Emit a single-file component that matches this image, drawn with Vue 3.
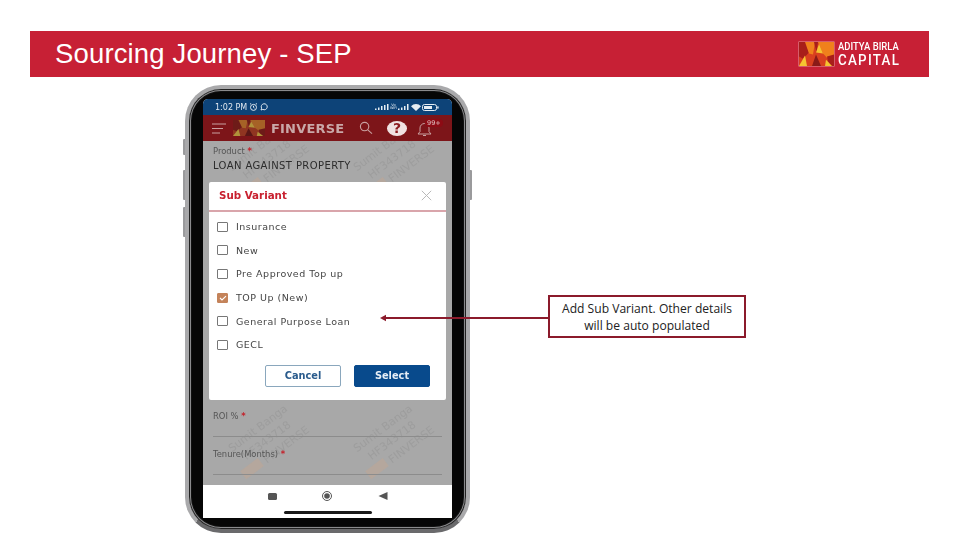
<script setup>
const options = [
  { label: 'Insurance', checked: false },
  { label: 'New', checked: false },
  { label: 'Pre Approved Top up', checked: false },
  { label: 'TOP Up (New)', checked: true },
  { label: 'General Purpose Loan', checked: false },
  { label: 'GECL', checked: false }
]
const marks = ['m1', 'm2', 'm3', 'm4']
</script>

<template>
  <div class="slide">
    <svg width="0" height="0" class="defs">
      <symbol id="ab-logo" viewBox="0 0 35 23" preserveAspectRatio="none">
        <rect width="35" height="23" fill="#d9401f" />
        <polygon points="0,0 7,0 10,10 4,16 0,14" fill="#a81e1a" />
        <polygon points="6,0 16,0 14,12 10,11" fill="#f0801c" />
        <polygon points="15,0 19,0 17.500,10" fill="#a81e1a" />
        <polygon points="19,0 35,0 35,15 28,15 24,11" fill="#f0801c" />
        <polygon points="17,10 20,2 24,11" fill="#f5c431" />
        <polygon points="28,14 35,12 35,23 30,23" fill="#a81e1a" />
        <polygon points="0,23 6,13 8,23" fill="#f5c431" />
        <polygon points="17,12 13,23 22,23" fill="#8a1a18" />
        <polygon points="27,17 33,23 26,23" fill="#f5c431" />
      </symbol>
    </svg>

    <header class="banner">
      <h1 class="banner-title">Sourcing Journey - SEP</h1>
      <div class="brand">
        <svg class="brand-mark"><use href="#ab-logo" /></svg>
        <div class="brand-text">
          <span class="brand-top">ADITYA BIRLA</span>
          <span class="brand-bottom">CAPITAL</span>
        </div>
      </div>
    </header>

    <main class="stage">
      <div class="phone">
        <i class="side-btn b1"></i>
        <i class="side-btn b2"></i>
        <i class="side-btn b3"></i>
        <i class="side-btn b4"></i>
        <div class="bezel">
          <div class="screen">
            <div class="status">
              <span class="status-left">
                1:02 PM
                <svg width="9" height="8" viewBox="0 0 9 8" fill="none" stroke="#dfe7ef" stroke-width="1"><circle cx="4.500" cy="4.400" r="3" /><path d="M1 1.200 2.200.4M8 1.200 6.800.4M4.500 2.800v1.600l1 .6" /></svg>
                <svg width="8" height="8" viewBox="0 0 8 8" fill="none" stroke="#dfe7ef" stroke-width="1"><path d="M1 7l.6-1.800A3 3 0 1 1 2.800 6.400Z" /></svg>
              </span>
              <span class="status-right">
                <svg width="14" height="6" viewBox="0 0 14 6" fill="#e6edf3"><rect x="0" y="4.500" width="1.500" height="1.500" /><rect x="3" y="3.500" width="1.500" height="2.500" /><rect x="6" y="2" width="1.500" height="4" /><rect x="9" y="1" width="1.500" height="5" /><rect x="12" y="0" width="1.500" height="6" /></svg>
                <span class="vo">Vo<br />WiFi</span>
                <svg width="12" height="6" viewBox="0 0 12 6" fill="#e6edf3"><rect x="0" y="4.500" width="1.500" height="1.500" /><rect x="3" y="3.500" width="1.500" height="2.500" /><rect x="6" y="2" width="1.500" height="4" /><rect x="9" y="0" width="1.500" height="6" /></svg>
                <svg width="10" height="7" viewBox="0 0 10 7" fill="#e6edf3"><path d="M0 2.200A7 7 0 0 1 10 2.200L5 7Z" /></svg>
                <svg width="17" height="7" viewBox="0 0 17 7"><rect x=".5" y=".5" width="14" height="6" rx="2" fill="none" stroke="#e6edf3" /><rect x="2" y="2" width="8" height="3" fill="#e6edf3" /><rect x="15.200" y="2.400" width="1.400" height="2.200" fill="#e6edf3" /></svg>
              </span>
            </div>

            <div class="appbar">
              <svg class="menu" width="14" height="11" viewBox="0 0 14 11" stroke="#c9a1a1" stroke-width="1"><path d="M0 1h14M0 5.500h11M0 10h8" /></svg>
              <svg class="app-mark"><use href="#ab-logo" /></svg>
              <span class="app-name">FINVERSE</span>
              <svg class="search" width="14" height="14" viewBox="0 0 14 14" fill="none" stroke="#c9a1a1" stroke-width="1.100"><circle cx="5.600" cy="5.600" r="4.200" /><path d="M8.800 8.800 13 12.600" /></svg>
              <span class="help">?</span>
              <span class="bell-wrap">
                <svg width="15" height="15" viewBox="0 0 15 15" fill="none" stroke="#c9a1a1" stroke-width="1"><path d="M1 13h13l-2-2.400V7a4.500 4.500 0 0 0-9 0v3.600ZM6 14.500h3" /></svg>
                <span class="badge">99+</span>
              </span>
            </div>

            <div class="content">
              <span v-for="m in marks" :key="m" class="mark" :class="m">
                Sumit Banga<br />HF343718<br /><i class="mark-logo"></i>FINVERSE
              </span>

              <div class="field product">
                <span class="field-label">Product <b>*</b></span>
                <span class="field-value">LOAN AGAINST PROPERTY</span>
              </div>
              <div class="field roi">
                <span class="field-label">ROI % <b>*</b></span>
              </div>
              <div class="field tenure">
                <span class="field-label">Tenure(Months) <b>*</b></span>
              </div>

              <div class="dialog">
                <div class="dialog-head">
                  <span class="dialog-title">Sub Variant</span>
                  <svg width="11" height="11" viewBox="0 0 11 11" stroke="#b9b9b9" stroke-width="1"><path d="M.8.800l9.400 9.400M10.200.800.800 10.200" /></svg>
                </div>
                <ul class="options">
                  <li v-for="o in options" :key="o.label" class="option">
                    <span class="box" :class="{ on: o.checked }">
                      <svg v-if="o.checked" width="8" height="6" viewBox="0 0 8 6" fill="none" stroke="#fff" stroke-width="1.100"><path d="M1 3l2 2 4-3.800" /></svg>
                    </span>
                    <span class="option-label">{{ o.label }}</span>
                  </li>
                </ul>
                <div class="actions">
                  <button class="btn cancel" type="button">Cancel</button>
                  <button class="btn select" type="button">Select</button>
                </div>
              </div>
            </div>

            <div class="navbar">
              <div class="nav-icons">
                <i class="nav-square"></i>
                <svg width="14" height="10" viewBox="0 0 14 10"><circle cx="7" cy="5" r="4.500" fill="none" stroke="#555" stroke-width="1" /><circle cx="7" cy="5" r="2.800" fill="#555" /></svg>
                <svg width="10" height="8" viewBox="0 0 10 8"><polygon points="9.500,0 9.500,8 .5,4" fill="#555" /></svg>
              </div>
              <i class="home-bar"></i>
            </div>
          </div>
        </div>
      </div>

      <div class="callout">
        <svg class="arrow" width="168" height="8" viewBox="0 0 168 8"><polygon points="0,4 6,.8 6,7.200" fill="#8b1a2b" /><rect x="4" y="3" width="164" height="2" fill="#8b1a2b" /></svg>
        <p class="callout-text">Add Sub Variant. Other details will be auto populated</p>
      </div>
    </main>
  </div>
</template>

<style>
html, body { margin: 0; background: #fff; }
</style>

<style scoped>
.slide { width: 960px; height: 540px; overflow: hidden; background: #fff; padding-top: 31px; box-sizing: border-box; font-family: "Liberation Sans", Arial, sans-serif; }
.defs { position: absolute; }
.banner { margin-left: 30px; width: 899px; height: 46px; background: #c72035; display: flex; align-items: center; justify-content: space-between; box-sizing: border-box; padding: 0 30px 0 25px; color: #fff; }
.banner-title { margin: 0; font-weight: 400; font-size: 27.500px; letter-spacing: .15px; }
.brand { display: flex; align-items: center; gap: 4px; }
.brand-mark { width: 35px; height: 24px; box-shadow: 0 0 0 .5px #e59aa0; }
.brand-text { display: flex; flex-direction: column; gap: 2px; width: 61px; font-family: Roboto, sans-serif; }
.brand-top { font-size: 10.500px; line-height: 10px; font-weight: 500; transform: scaleX(.9); transform-origin: left; white-space: nowrap; }
.brand-bottom { font-size: 15.500px; line-height: 13px; font-weight: 500; letter-spacing: 1.500px; white-space: nowrap; transform: scaleX(.86); transform-origin: left; }

.stage { position: relative; display: flex; padding: 8px 0 0 185px; }
.phone { position: relative; width: 285px; height: 448px; }
.side-btn { position: absolute; width: 3px; background: #9a9a9c; border-radius: 1px; }
.b1 { left: -2px; top: 54px; height: 16px; }
.b2 { left: -2px; top: 85px; height: 30px; }
.b3 { left: -2px; top: 122px; height: 30px; }
.b4 { right: -2px; top: 85px; height: 30px; }
.bezel { position: relative; width: 100%; height: 100%; box-sizing: border-box; padding: 10px 14px 11px; border-radius: 36px; border: 4px solid #a9a9ab; border-bottom-color: #6a6a6c; background: #060606; box-shadow: inset 0 0 0 1px #222, inset 0 0 0 2px #8a8a8c, inset 0 0 0 3px #111; }
.screen { width: 249px; height: 419px; display: flex; flex-direction: column; border-radius: 5px 5px 0 0; overflow: hidden; font-family: "DejaVu Sans", "Liberation Sans", sans-serif; filter: blur(.4px); background: #fff; }

.status { height: 16px; flex: none; background: #0d4378; color: #dfe7ef; display: flex; align-items: center; justify-content: space-between; padding: 0 13px 0 12px; font-size: 8px; font-weight: 500; }
.status-left { display: flex; align-items: center; gap: 2px; }
.status-right { display: flex; align-items: center; gap: 1px; }
.vo { font-size: 3.500px; line-height: 3.500px; text-align: center; }

.appbar { height: 26px; flex: none; background: #7d1519; display: flex; align-items: center; position: relative; z-index: 2; padding-left: 9px; }
.menu { flex: none; }
.app-mark { width: 32px; height: 16px; margin-left: 7px; flex: none; filter: saturate(.8) brightness(.75); }
.app-name { margin-left: 6px; color: #c9a8a8; font-size: 13px; font-weight: 700; letter-spacing: .2px; width: 74px; flex: none; white-space: nowrap; }
.search { margin-left: 14px; flex: none; }
.help { margin-left: 14px; width: 20px; height: 15px; border-radius: 50%; background: #f0e2e2; color: #8c1a1e; font-size: 14px; line-height: 15px; text-align: center; font-weight: 700; flex: none; }
.bell-wrap { margin-left: 10px; position: relative; display: flex; }
.badge { position: absolute; left: 8px; top: -2px; background: #8d0b14; color: #e2c5c5; font-size: 6.500px; line-height: 8px; border-radius: 4px; padding: 0 2px; }

.content { position: relative; flex: 1; background: #a8a8a8; overflow: hidden; }
.field { position: absolute; left: 10px; right: 10px; display: flex; flex-direction: column; color: #333; }
.field-label { font-size: 8.400px; line-height: 10px; color: #555; }
.field-label b { color: #c4202a; }
.field-value { font-size: 10px; line-height: 12px; margin-top: 4px; letter-spacing: .4px; color: #2c2c2c; white-space: nowrap; }
.product { top: 5px; }
.roi { top: 270px; height: 25px; border-bottom: 1px solid #8c8c8c; }
.tenure { top: 308px; height: 25px; border-bottom: 1px solid #8c8c8c; }
.mark { position: absolute; width: 100px; height: 45px; transform: rotate(-37deg); font-size: 11px; line-height: 15px; text-align: center; color: rgba(115,115,115,.2); white-space: nowrap; }
.mark-logo { display: inline-block; width: 22px; height: 10px; margin-right: 4px; background: rgba(200,165,140,.4); }
.m1 { left: 14px; top: -4px; }
.m2 { left: 139px; top: -4px; }
.m3 { left: 14px; top: 277px; }
.m4 { left: 139px; top: 277px; }

.dialog { position: absolute; left: 6px; top: 41px; width: 237px; height: 218px; background: #fff; border-radius: 2px; display: flex; flex-direction: column; }
.dialog-head { height: 30px; flex: none; box-sizing: border-box; border-bottom: 2px solid #d9a5ab; display: flex; align-items: center; justify-content: space-between; padding: 0 14px 2px 10px; }
.dialog-title { color: #c8202f; font-size: 10.300px; font-weight: 700; }
.options { list-style: none; margin: 0; padding: 3px 0 0 8px; display: flex; flex-direction: column; }
.option { height: 23.600px; display: flex; align-items: center; gap: 8px; }
.box { width: 11px; height: 10px; box-sizing: border-box; border: 1px solid #777; border-radius: 1px; display: flex; align-items: center; justify-content: center; flex: none; }
.box.on { background: #c4835a; border-color: #c4835a; }
.option-label { font-size: 9.500px; color: #444; letter-spacing: .5px; white-space: nowrap; }
.actions { display: flex; justify-content: flex-end; gap: 13px; padding: 8px 16px 0 0; }
.btn { width: 76px; height: 22px; border-radius: 2px; font-family: inherit; font-size: 9.800px; font-weight: 700; padding: 0; }
.cancel { background: #fff; border: 1px solid #8aa7bd; color: #2a5b8c; }
.select { background: #084a8c; border: 1px solid #084a8c; color: #e6eef6; }

.navbar { height: 33px; flex: none; background: #fff; display: flex; flex-direction: column; align-items: center; }
.nav-icons { display: flex; align-items: center; justify-content: space-between; width: 120px; margin-top: 6px; height: 10px; }
.nav-square { width: 9px; height: 7px; background: #555; border-radius: 1.500px; }
.home-bar { margin-top: 10px; width: 88px; height: 2.500px; border-radius: 2px; background: #1a1a1a; }

.callout { position: relative; margin: 210px 0 0 78px; width: 198px; height: 43px; flex: none; box-sizing: border-box; border: 2px solid #8b1a2b; background: #fff; display: flex; align-items: center; justify-content: center; }
.arrow { position: absolute; right: 196px; top: 17px; }
.callout-text { margin: 0; width: 180px; text-align: center; font-family: "Open Sans", sans-serif; font-size: 12.100px; line-height: 17px; color: #222; }
</style>
